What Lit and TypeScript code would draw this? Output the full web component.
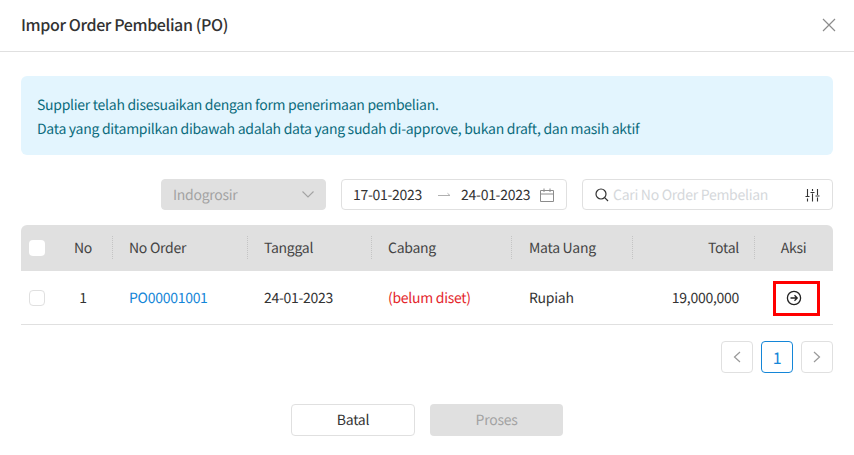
import { LitElement, html, css } from "lit";
import { customElement } from "lit/decorators.js";

@customElement("app-root")
export class AppRoot extends LitElement {
  static styles = css`
    :host { display: block; width: 854px; height: 455px; overflow: hidden; background: #fff; color: #333;
      font-family: "Noto Sans CJK JP", "Noto Sans", sans-serif; font-size: 14px; line-height: 20px; text-rendering: geometricPrecision; letter-spacing: -0.02em; }
    * { box-sizing: border-box; }
    .head { height: 52px; border-bottom: 1px solid #e0e0e0; display: flex; align-items: center; justify-content: space-between; padding: 0 18px 1px 21px; }
    .title { font-size: 16px; font-weight: 500; color: #333; margin-top: -2px; letter-spacing: -0.024em; }
    .close { display: block; }
    .body { padding: 24px 21px 0; }
    .alert { height: 79px; background: #e3f5fe; border-radius: 6px; padding: 17px 16px 0; color: #0a6b7c; line-height: 24px; }
    .filters { display: flex; justify-content: flex-end; gap: 15px; margin-top: 24px; }
    .ctl { height: 31px; border: 1px solid #e0e0e0; border-radius: 4px; display: flex; align-items: center; }
    .sel { width: 165px; background: #e0e0e0; color: #a3a3a3; padding: 0 11px 0 11px; justify-content: space-between; }
    .date { width: 226px; padding: 0 12px 0 11px; color: #333; }
    .date .cal { margin-left: auto; }
    .date .arrow { margin: 0 10px 0 16px; }
    .search { width: 251px; padding: 0 12px; gap: 4px; color: #d5d8db; }
    .search .ph { flex: 1; }
    table { border-collapse: separate; border-spacing: 0; table-layout: fixed; width: 812px; margin-top: 15px; }
    th { height: 46px; background: #e0e0e0; font-weight: 400; text-align: left; padding: 0 16px; position: relative; color: #444; }
    th:first-child { border-top-left-radius: 6px; }
    th:last-child { border-top-right-radius: 6px; }
    th.div::after { content: ""; position: absolute; right: 0; top: 11px; height: 23px; border-right: 1px dotted #c4c4c4; }
    td { height: 54px; padding: 1px 16px 0; border-bottom: 1px solid #e0e0e0; color: #333; }
    th.chk, td.chk { padding: 0 0 0 8px; }
    th.mu, td.mu { padding-left: 17px; }
    .c { text-align: center; }
    .r { text-align: right; }
    .cb { width: 16px; height: 16px; border-radius: 4px; display: block; }
    th .cb { background: #fff; }
    td .cb { border: 1px solid #e0e0e0; }
    .link { color: #1486d8; }
    .red { color: #e4262c; }
    .aksi { position: relative; padding: 0 1px 0 0; }
    .go { display: block; margin: 0 auto; }
    .mark { position: absolute; left: 18px; top: 10px; width: 47px; height: 35px; border: 3px solid #f00; }
    .pager { display: flex; justify-content: flex-end; gap: 8px; margin-top: 16px; }
    .pg { width: 32px; height: 32px; border: 1px solid #e0e0e0; border-radius: 4px; display: flex; align-items: center; justify-content: center; color: #1486d8; font-size: 16px; }
    .pg.on { border-color: #1486d8; }
    .actions { display: flex; justify-content: center; gap: 15px; margin-top: 31px; }
    .btn { height: 32px; border-radius: 4px; display: flex; align-items: center; justify-content: center; }
    .batal { width: 124px; border: 1px solid #e0e0e0; color: #333; }
    .proses { width: 133px; background: #e0e0e0; color: #a3a3a3; }
  `;

  render() {
    return html`
      <div class="head">
        <div class="title">Impor Order Pembelian (PO)</div>
        <svg class="close" width="14" height="14" viewBox="0 0 14 14" fill="none" stroke="#8c8c8c" stroke-width="1.2"><path d="M1 1l12 12M13 1L1 13"/></svg>
      </div>
      <div class="body">
        <div class="alert">
          Supplier telah disesuaikan dengan form penerimaan pembelian.<br />
          Data yang ditampilkan dibawah adalah data yang sudah di-approve, bukan draft, dan masih aktif
        </div>
        <div class="filters">
          <div class="ctl sel">
            <span>Indogrosir</span>
            <svg width="12" height="7" viewBox="0 0 12 7" fill="none" stroke="#a3a3a3" stroke-width="1.1"><path d="M.5.5L6 6l5.500-5.500"/></svg>
          </div>
          <div class="ctl date">
            <span>17-01-2023</span>
            <svg class="arrow" width="13" height="5" viewBox="0 0 13 5" fill="none" stroke="#b0b0b0" stroke-width="1"><path d="M0 3.500h12M9.500 1.300L12 3.500"/></svg>
            <span>24-01-2023</span>
            <svg class="cal" width="14" height="14" viewBox="0 0 14 14" fill="none" stroke="#8c8c8c" stroke-width="1"><path d="M.5 2.500h13v11H.5zM.5 6h13M4 .5v3.500M10 .5v3.500"/></svg>
          </div>
          <div class="ctl search">
            <svg width="14" height="14" viewBox="0 0 14 14" fill="none" stroke="#333" stroke-width="1.2"><circle cx="6" cy="6" r="5"/><path d="M9.700 9.700L13 13"/></svg>
            <span class="ph">Cari No Order Pembelian</span>
            <svg width="15" height="14" viewBox="0 0 15 14" fill="none" stroke="#333" stroke-width="1.1"><path d="M2.500 1v7M2.500 10.500v3M7.500 1v2M7.500 5.500v8M12.500 1v6M12.500 9.500v4M.5 8.500h4M5.500 4.500h4M10.500 8h4"/></svg>
          </div>
        </div>
        <table>
          <colgroup>
            <col style="width:32px" /><col style="width:60px" /><col style="width:135px" /><col style="width:124px" />
            <col style="width:140px" /><col style="width:121px" /><col style="width:122px" /><col style="width:78px" />
          </colgroup>
          <thead>
            <tr>
              <th class="chk"><span class="cb"></span></th>
              <th class="c div">No</th>
              <th class="div">No Order</th>
              <th class="div">Tanggal</th>
              <th class="div">Cabang</th>
              <th class="div mu">Mata Uang</th>
              <th class="r div">Total</th>
              <th class="c aksi">Aksi</th>
            </tr>
          </thead>
          <tbody>
            <tr>
              <td class="chk"><span class="cb"></span></td>
              <td class="c">1</td>
              <td class="link">PO00001001</td>
              <td>24-01-2023</td>
              <td class="red">(belum diset)</td>
              <td class="mu">Rupiah</td>
              <td class="r">19,000,000</td>
              <td class="aksi">
                <svg class="go" width="16" height="16" viewBox="0 0 16 16" fill="none" stroke="#222" stroke-width="1.3"><circle cx="8" cy="8" r="6.600"/><path d="M4.500 8h6.500M8.500 5.300L11.200 8 8.500 10.700"/></svg>
                <div class="mark"></div>
              </td>
            </tr>
          </tbody>
        </table>
        <div class="pager">
          <div class="pg"><svg width="8" height="12" viewBox="0 0 8 12" fill="none" stroke="#999" stroke-width="1.2"><path d="M7 1L1.500 6 7 11"/></svg></div>
          <div class="pg on">1</div>
          <div class="pg"><svg width="8" height="12" viewBox="0 0 8 12" fill="none" stroke="#999" stroke-width="1.2"><path d="M1 1l5.500 5L1 11"/></svg></div>
        </div>
        <div class="actions">
          <div class="btn batal">Batal</div>
          <div class="btn proses">Proses</div>
        </div>
      </div>
    `;
  }
}
